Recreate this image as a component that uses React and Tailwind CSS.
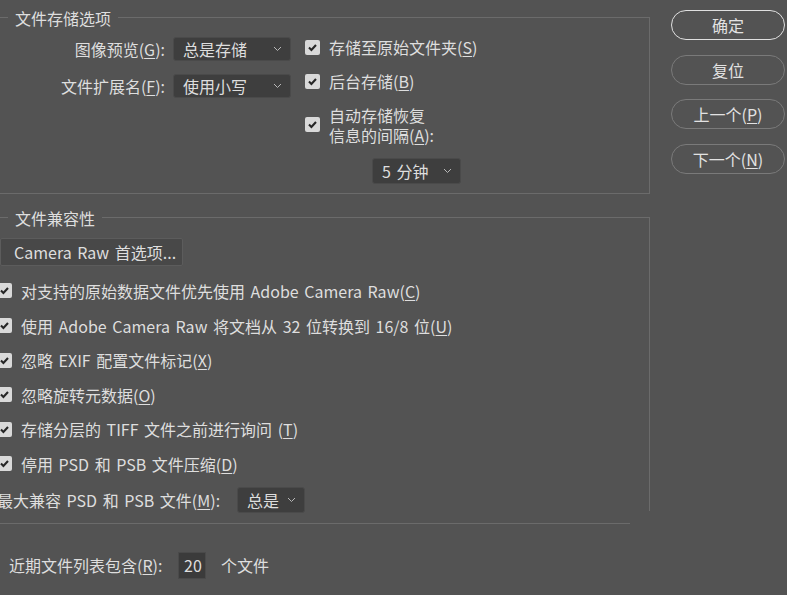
import React from "react";

// Photoshop-style prefs panel: 文件处理
const Mn = ({ children }) => (
  <span className="underline underline-offset-[2px] decoration-1">{children}</span>
);

const Chevron = () => (
  <svg width="9" height="6" viewBox="0 0 9 6" className="shrink-0">
    <polyline points="1,1 4.5,4.5 8,1" fill="none" stroke="#b8b8b8" strokeWidth="1" />
  </svg>
);

const Select = ({ children, className = "" }) => (
  <div
    className={
      "flex items-center justify-between bg-[#3e3e3e] border border-[#4a4a4a] rounded-[3px] pl-[9px] pr-[8px] " +
      className
    }
  >
    <span>{children}</span>
    <Chevron />
  </div>
);

const Check = ({ className = "" }) => (
  <span
    className={
      "w-[15px] h-[15px] shrink-0 rounded-[2px] bg-[#d9d9d9] flex items-center justify-center " +
      className
    }
  >
    <svg width="11" height="11" viewBox="0 0 11 11">
      <polyline points="2,5.6 4.4,8 9,3" fill="none" stroke="#262626" strokeWidth="2.1" />
    </svg>
  </span>
);

const Legend = ({ children }) => (
  <span className="absolute left-[8px] -top-[10px] bg-[#535353] px-[7px] leading-[20px]">
    {children}
  </span>
);

const compatRows = [
  <>对支持的原始数据文件优先使用 Adobe Camera Raw(<Mn>C</Mn>)</>,
  <>使用 Adobe Camera Raw 将文档从 32 位转换到 16/8 位(<Mn>U</Mn>)</>,
  <>忽略 EXIF 配置文件标记(<Mn>X</Mn>)</>,
  <>忽略旋转元数据(<Mn>O</Mn>)</>,
  <>存储分层的 TIFF 文件之前进行询问 (<Mn>T</Mn>)</>,
  <>停用 PSD 和 PSB 文件压缩(<Mn>D</Mn>)</>,
];

const buttons = [
  { label: <>确定</>, primary: true },
  { label: <>复位</> },
  { label: <>上一个(<Mn>P</Mn>)</> },
  { label: <>下一个(<Mn>N</Mn>)</> },
];

export default function App() {
  return (
    <div className="w-[787px] h-[595px] overflow-hidden bg-[#535353] text-[#dedede] text-[16px] leading-[20px] [word-spacing:2px] font-['Noto_Sans_CJK_SC','Noto_Sans',sans-serif] flex">
      {/* LEFT */}
      <div className="w-[650px] shrink-0 flex flex-col">
        {/* 文件存储选项 */}
        <div className="relative mt-[17px] h-[177px] border-t border-r border-b border-[#6b6b6b]">
          <Legend>文件存储选项</Legend>
          <div className="flex pt-[19px]">
            <div className="flex flex-col gap-[13px]">
              <div className="flex items-center h-[24px]">
                <span className="w-[165px] text-right">图像预览(<Mn>G</Mn>):</span>
                <Select className="ml-[8px] w-[118px] h-[24px]">总是存储</Select>
              </div>
              <div className="flex items-center h-[24px]">
                <span className="w-[165px] text-right">文件扩展名(<Mn>F</Mn>):</span>
                <Select className="ml-[8px] w-[118px] h-[24px]">使用小写</Select>
              </div>
            </div>
            <div className="ml-[14px] -mt-[2px] flex flex-col">
              <div className="flex items-center gap-[9px] h-[24px]">
                <Check />
                <span>存储至原始文件夹(<Mn>S</Mn>)</span>
              </div>
              <div className="flex items-center gap-[9px] h-[24px] mt-[10px]">
                <Check />
                <span>后台存储(<Mn>B</Mn>)</span>
              </div>
              <div className="flex items-center gap-[9px] mt-[11.5px]">
                <Check />
                <div className="flex flex-col leading-[20px]">
                  <span>自动存储恢复</span>
                  <span>信息的间隔(<Mn>A</Mn>):</span>
                </div>
              </div>
              <Select className="ml-[67px] mt-[13.5px] w-[89px] h-[26px]">5 分钟</Select>
            </div>
          </div>
        </div>

        {/* 文件兼容性 */}
        <div className="relative mt-[23px] h-[294px] border-t border-r border-[#6b6b6b]">
          <Legend>文件兼容性</Legend>
          <div className="mt-[20px] w-[183px] h-[28px] flex items-center pl-[13px] bg-[#484848] border border-[#5c5c5c] rounded-[2px]">
            Camera Raw 首选项...
          </div>
          <div className="mt-[7.7px] flex flex-col">
            {compatRows.map((row, i) => (
              <div key={i} className="h-[34.6px] flex items-center gap-[9px] -ml-[3px]">
                <Check />
                <span>{row}</span>
              </div>
            ))}
          </div>
          <div className="mt-[6px] h-[26px] flex items-center -ml-[3px]">
            <span className="w-[240px]">最大兼容 PSD 和 PSB 文件(<Mn>M</Mn>):</span>
            <Select className="w-[68px] h-[26px]">总是</Select>
          </div>
        </div>

        <div className="mt-[12px] h-px w-[630px] bg-[#6b6b6b]" />

        <div className="mt-[27.5px] h-[27px] flex items-center pl-[9px]">
          <span className="w-[169px]">近期文件列表包含(<Mn>R</Mn>):</span>
          <div className="w-[28px] h-[27px] flex items-center pl-[5px] bg-[#3b3b3b] border border-[#4a4a4a]">
            20
          </div>
          <span className="ml-[15px]">个文件</span>
        </div>
      </div>

      {/* RIGHT */}
      <div className="ml-[21px] pt-[10px] w-[114px] flex flex-col gap-[14.7px]">
        {buttons.map((b, i) => (
          <button
            key={i}
            className={
              "h-[30px] rounded-full flex items-center justify-center text-[#e2e2e2] " +
              (b.primary ? "border-[1.5px] border-[#e0e0e0]" : "border border-[#7a7a7a]")
            }
          >
            {b.label}
          </button>
        ))}
      </div>
    </div>
  );
}
